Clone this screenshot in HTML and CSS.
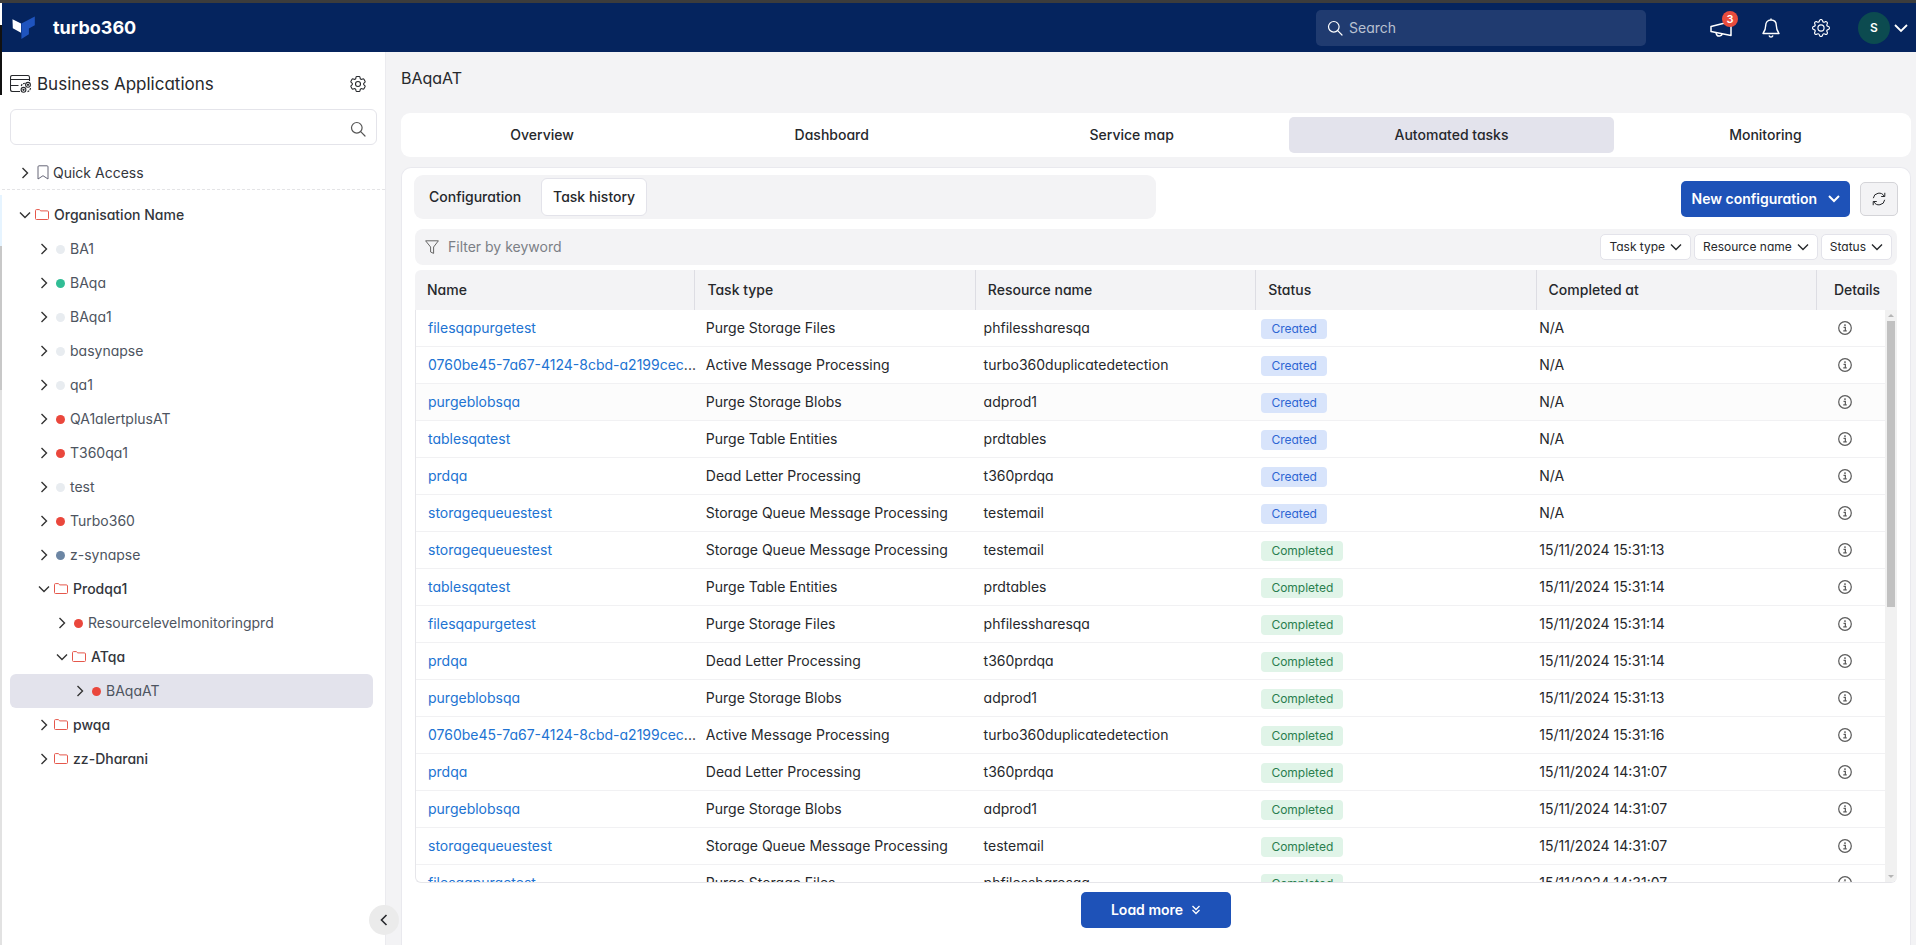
FILE: index.html
```html
<!DOCTYPE html>
<html lang="en">
<head>
<meta charset="utf-8">
<title>turbo360 - BAqaAT</title>
<link rel="stylesheet" href="styles.css">
</head>
<body>
<svg class="sprite" aria-hidden="true">
  <symbol id="i-right" viewBox="0 0 14 14"><path d="M4.5 2 9.5 7l-5 5" fill="none" stroke="currentColor" stroke-width="1.4"/></symbol>
  <symbol id="i-down" viewBox="0 0 14 14"><path d="M2 4.5 7 9.5l5-5" fill="none" stroke="currentColor" stroke-width="1.4"/></symbol>
  <symbol id="i-folder" viewBox="0 0 14 12"><path d="M.5 9.5V1.6Q.5.6 1.5.6h2.8l1.5 1.3h6.6q1.1 0 1.1 1.1v6.5q0 1-1 1h-11q-1 0-1-1z" fill="none" stroke="currentColor"/></symbol>
  <symbol id="i-search" viewBox="0 0 16 16"><circle cx="6.8" cy="6.8" r="5.3" fill="none" stroke="currentColor" stroke-width="1.2"/><path d="m10.7 10.7 4.3 4.3" stroke="currentColor" stroke-width="1.2" stroke-linecap="round"/></symbol>
  <symbol id="i-info" viewBox="0 0 16 16"><circle cx="8" cy="8" r="7.2" fill="none" stroke="currentColor" stroke-width="1.4"/><circle cx="8" cy="4.7" r="1.1" fill="currentColor"/><path d="M6.3 7.3h2.1v4M6 11.4h4" fill="none" stroke="currentColor" stroke-width="1.4"/></symbol>
</svg>

<div class="window">
<div class="window-edge"></div>
<div class="app">
  <header class="topbar">
    <a class="brand" href="#">
      <svg class="brand-mark" viewBox="0 0 24 24" aria-hidden="true"><path d="M.5 3.2 9 7.6v9.2L.8 12.2z" fill="#fff"/><path d="M9.4 7.6 22.8.6v8.6l-5.9 3.4v5.6L9.4 23z" fill="#1f54be"/></svg>
      <span>turbo360</span>
    </a>
    <label class="global-search">
      <svg class="ic16" aria-hidden="true"><use href="#i-search"/></svg>
      <input type="search" placeholder="Search" aria-label="Search">
    </label>
    <nav class="top-actions" aria-label="Account">
      <button class="top-btn" aria-label="Announcements">
        <svg class="ic22" viewBox="0 0 22 22" fill="none" stroke="currentColor" stroke-width="1.5" stroke-linejoin="round" aria-hidden="true"><path d="M1 9.5 21 4.5v14L1 14.5z"/><path d="M6 15.5q.5 4 3.600 3.500 2.400-.3 2.400-2.200"/></svg>
        <span class="count">3</span>
      </button>
      <button class="top-btn" aria-label="Notifications">
        <svg class="ic20" viewBox="0 0 20 20" fill="none" stroke="currentColor" stroke-width="1.400" stroke-linejoin="round" aria-hidden="true"><path d="M10 2c-3.600 0-5.300 2.500-5.300 5.500 0 4.200-1.200 6-2.700 8h16c-1.500-2-2.700-3.800-2.700-8C15.300 4.500 13.600 2 10 2zM10 .6V2"/><path d="M8 17.600q.6 1.500 2 1.500t2-1.500"/></svg>
      </button>
      <button class="top-btn" aria-label="Settings">
        <svg class="ic18" viewBox="0 0 16 16" fill="currentColor" aria-hidden="true"><path d="M8 4.754a3.246 3.246 0 1 0 0 6.492 3.246 3.246 0 0 0 0-6.492zM5.754 8a2.246 2.246 0 1 1 4.492 0 2.246 2.246 0 0 1-4.492 0z"/><path d="M9.796 1.343c-.527-1.79-3.065-1.79-3.592 0l-.094.319a.873.873 0 0 1-1.255.52l-.292-.16c-1.64-.892-3.433.902-2.54 2.541l.159.292a.873.873 0 0 1-.52 1.255l-.319.094c-1.79.527-1.79 3.065 0 3.592l.319.094a.873.873 0 0 1 .52 1.255l-.16.292c-.892 1.64.901 3.434 2.541 2.54l.292-.159a.873.873 0 0 1 1.255.52l.094.319c.527 1.79 3.065 1.79 3.592 0l.094-.319a.873.873 0 0 1 1.255-.52l.292.16c1.64.893 3.434-.902 2.54-2.541l-.159-.292a.873.873 0 0 1 .52-1.255l.319-.094c1.79-.527 1.79-3.065 0-3.592l-.319-.094a.873.873 0 0 1-.52-1.255l.16-.292c.893-1.64-.902-3.433-2.541-2.54l-.292.159a.873.873 0 0 1-1.255-.52l-.094-.319zm-2.633.283c.246-.835 1.428-.835 1.674 0l.094.319a1.873 1.873 0 0 0 2.693 1.115l.291-.16c.764-.415 1.6.42 1.184 1.185l-.159.292a1.873 1.873 0 0 0 1.116 2.692l.318.094c.835.246.835 1.428 0 1.674l-.319.094a1.873 1.873 0 0 0-1.115 2.693l.16.291c.415.764-.42 1.6-1.185 1.184l-.291-.159a1.873 1.873 0 0 0-2.693 1.116l-.094.318c-.246.835-1.428.835-1.674 0l-.094-.319a1.873 1.873 0 0 0-2.692-1.115l-.292.16c-.764.415-1.6-.42-1.184-1.185l.159-.291A1.873 1.873 0 0 0 1.945 8.93l-.319-.094c-.835-.246-.835-1.428 0-1.674l.319-.094A1.873 1.873 0 0 0 3.06 4.377l-.16-.292c-.415-.764.42-1.6 1.185-1.184l.292.159a1.873 1.873 0 0 0 2.692-1.115l.094-.319z"/></svg>
      </button>
      <button class="user-btn" aria-label="User menu">
        <span class="avatar">S</span>
        <svg class="ic14" viewBox="0 0 14 14" aria-hidden="true"><path d="M1 4l6 6 6-6" fill="none" stroke="currentColor" stroke-width="1.800"/></svg>
      </button>
    </nav>
  </header>

  <div class="body">
    <aside class="sidebar">
      <div class="side-head">
        <svg class="side-icon" viewBox="0 0 22 18" fill="none" stroke="currentColor" stroke-width="1.1" aria-hidden="true"><path d="M10 16.500H2.500q-2 0-2-2v-12q0-2 2-2h15q2 0 2 2V6M.5 4.500h19M.5 10.500h8"/><circle cx="18" cy="9.800" r="2.400"/><circle cx="18" cy="9.800" r=".6"/><circle cx="13.500" cy="14.800" r="2.400"/><circle cx="13.500" cy="14.800" r=".6"/><path d="M11.200 11q.8-2.500 3.600-2.600M20.500 13q-.5 3.500-4 3.800" stroke-dasharray="2 1"/></svg>
        <h1>Business Applications</h1>
        <button class="icon-btn" aria-label="Manage">
          <svg class="ic20" viewBox="0 0 24 24" fill="none" stroke="currentColor" stroke-width="1.300" aria-hidden="true"><path d="M9.594 3.940c.09-.542.56-.94 1.110-.94h2.593c.55 0 1.020.398 1.110.94l.213 1.281c.063.374.313.686.645.87.074.04.147.083.22.127.324.196.72.257 1.075.124l1.217-.456a1.125 1.125 0 0 1 1.370.49l1.296 2.247a1.125 1.125 0 0 1-.26 1.431l-1.003.827c-.293.24-.438.613-.431.992a6.759 6.759 0 0 1 0 .255c-.007.378.138.75.43.99l1.005.828c.424.35.534.954.26 1.430l-1.298 2.247a1.125 1.125 0 0 1-1.369.491l-1.217-.456c-.355-.133-.75-.072-1.076.124a6.570 6.570 0 0 1-.22.128c-.331.183-.581.495-.644.869l-.213 1.280c-.09.543-.56.941-1.110.941h-2.594c-.55 0-1.020-.398-1.110-.94l-.213-1.281c-.062-.374-.312-.686-.644-.87a6.520 6.520 0 0 1-.22-.127c-.325-.196-.72-.257-1.076-.124l-1.217.456a1.125 1.125 0 0 1-1.369-.49l-1.297-2.247a1.125 1.125 0 0 1 .26-1.431l1.004-.827c.292-.24.437-.613.43-.992a6.932 6.932 0 0 1 0-.255c.007-.378-.138-.75-.43-.99l-1.004-.828a1.125 1.125 0 0 1-.26-1.430l1.297-2.247a1.125 1.125 0 0 1 1.370-.491l1.216.456c.356.133.751.072 1.076-.124.072-.044.146-.087.22-.128.332-.183.582-.495.644-.869l.214-1.281z"/><circle cx="12" cy="12" r="3"/></svg>
        </button>
      </div>
      <label class="side-search">
        <input type="text" aria-label="Search business applications">
        <svg class="ic16" aria-hidden="true"><use href="#i-search"/></svg>
      </label>
      <div class="quick node folder l0">
        <svg class="tw" aria-hidden="true"><use href="#i-right"/></svg>
        <svg class="bookmark" viewBox="0 0 12 15" aria-hidden="true"><path d="M1 14V1.800Q1 .8 2 .8h8q1 0 1 1V14l-5-3.300z" fill="none" stroke="currentColor"/></svg>
        <span>Quick Access</span>
      </div>
      <nav class="tree" aria-label="Business applications">
        <a href="#" class="node folder l0"><svg class="tw"><use href="#i-down"/></svg><svg class="fold"><use href="#i-folder"/></svg><span>Organisation Name</span></a>
        <a href="#" class="node l1"><svg class="tw"><use href="#i-right"/></svg><i class="dot"></i><span>BA1</span></a>
        <a href="#" class="node l1"><svg class="tw"><use href="#i-right"/></svg><i class="dot green"></i><span>BAqa</span></a>
        <a href="#" class="node l1"><svg class="tw"><use href="#i-right"/></svg><i class="dot"></i><span>BAqa1</span></a>
        <a href="#" class="node l1"><svg class="tw"><use href="#i-right"/></svg><i class="dot"></i><span>basynapse</span></a>
        <a href="#" class="node l1"><svg class="tw"><use href="#i-right"/></svg><i class="dot"></i><span>qa1</span></a>
        <a href="#" class="node l1"><svg class="tw"><use href="#i-right"/></svg><i class="dot red"></i><span>QA1alertplusAT</span></a>
        <a href="#" class="node l1"><svg class="tw"><use href="#i-right"/></svg><i class="dot red"></i><span>T360qa1</span></a>
        <a href="#" class="node l1"><svg class="tw"><use href="#i-right"/></svg><i class="dot"></i><span>test</span></a>
        <a href="#" class="node l1"><svg class="tw"><use href="#i-right"/></svg><i class="dot red"></i><span>Turbo360</span></a>
        <a href="#" class="node l1"><svg class="tw"><use href="#i-right"/></svg><i class="dot slate"></i><span>z-synapse</span></a>
        <a href="#" class="node folder l1"><svg class="tw"><use href="#i-down"/></svg><svg class="fold"><use href="#i-folder"/></svg><span>Prodqa1</span></a>
        <a href="#" class="node l2"><svg class="tw"><use href="#i-right"/></svg><i class="dot red"></i><span>Resourcelevelmonitoringprd</span></a>
        <a href="#" class="node folder l2"><svg class="tw"><use href="#i-down"/></svg><svg class="fold"><use href="#i-folder"/></svg><span>ATqa</span></a>
        <a href="#" class="node l3 selected" aria-current="page"><svg class="tw"><use href="#i-right"/></svg><i class="dot red"></i><span>BAqaAT</span></a>
        <a href="#" class="node folder l1"><svg class="tw"><use href="#i-right"/></svg><svg class="fold"><use href="#i-folder"/></svg><span>pwqa</span></a>
        <a href="#" class="node folder l1"><svg class="tw"><use href="#i-right"/></svg><svg class="fold"><use href="#i-folder"/></svg><span>zz-Dharani</span></a>
      </nav>
      <button class="collapse" aria-label="Collapse sidebar"><svg class="ic14" viewBox="0 0 14 14" aria-hidden="true"><path d="M9.500 2 4.500 7l5 5" fill="none" stroke="currentColor" stroke-width="1.600"/></svg></button>
    </aside>

    <main class="main">
      <h2 class="page-title">BAqaAT</h2>
      <nav class="tabs" aria-label="Sections">
        <button>Overview</button>
        <button>Dashboard</button>
        <button>Service map</button>
        <button class="active">Automated tasks</button>
        <button>Monitoring</button>
      </nav>
      <section class="panel">
        <div class="tools">
          <div class="subtabs">
            <button>Configuration</button>
            <button class="active">Task history</button>
          </div>
          <div class="tool-actions">
            <button class="primary new-config">New configuration <svg class="ic14" viewBox="0 0 14 14" aria-hidden="true"><path d="M2 4 7 9l5-5" fill="none" stroke="currentColor" stroke-width="2"/></svg></button>
            <button class="refresh" aria-label="Refresh"><svg class="ic14" viewBox="0 0 14 14" fill="none" stroke="currentColor" aria-hidden="true"><path d="M1.300 6.200A5.800 5.800 0 0 1 12.200 4.300M12.700 7.800A5.800 5.800 0 0 1 1.800 9.700M12.800.8v3.700H9.200M1.200 13.200V9.500h3.600"/></svg></button>
          </div>
        </div>
        <div class="filterbar">
          <svg class="ic14" viewBox="0 0 14 14" fill="none" stroke="currentColor" stroke-linejoin="round" aria-hidden="true"><path d="M.6.8h12.800L8.600 7v6.400L5.600 12V7z"/></svg>
          <input type="text" placeholder="Filter by keyword" aria-label="Filter by keyword">
          <button class="chip">Task type <svg class="ic14"><use href="#i-down"/></svg></button>
          <button class="chip">Resource name <svg class="ic14"><use href="#i-down"/></svg></button>
          <button class="chip">Status <svg class="ic14"><use href="#i-down"/></svg></button>
        </div>
        <div class="grid-wrap">
        <table class="grid grid-head">
          <colgroup><col><col><col><col><col><col class="c-details"></colgroup>
          <thead><tr><th>Name</th><th>Task type</th><th>Resource name</th><th>Status</th><th>Completed at</th><th>Details</th></tr></thead>
        </table>
        <div class="grid-body">
          <div class="grid-scroll">
            <table class="grid" aria-label="Task history">
              <colgroup><col><col><col><col><col><col class="c-details"></colgroup>
              <tbody>
                <tr><td><a href="#">filesqapurgetest</a></td><td>Purge Storage Files</td><td>phfilessharesqa</td><td><span class="badge created">Created</span></td><td>N/A</td><td><button class="info" aria-label="Details"><svg class="ic14"><use href="#i-info"/></svg></button></td></tr>
                <tr><td><a href="#">0760be45-7a67-4124-8cbd-a2199cec</a>...</td><td>Active Message Processing</td><td>turbo360duplicatedetection</td><td><span class="badge created">Created</span></td><td>N/A</td><td><button class="info" aria-label="Details"><svg class="ic14"><use href="#i-info"/></svg></button></td></tr>
                <tr class="hovered"><td><a href="#">purgeblobsqa</a></td><td>Purge Storage Blobs</td><td>adprod1</td><td><span class="badge created">Created</span></td><td>N/A</td><td><button class="info" aria-label="Details"><svg class="ic14"><use href="#i-info"/></svg></button></td></tr>
                <tr><td><a href="#">tablesqatest</a></td><td>Purge Table Entities</td><td>prdtables</td><td><span class="badge created">Created</span></td><td>N/A</td><td><button class="info" aria-label="Details"><svg class="ic14"><use href="#i-info"/></svg></button></td></tr>
                <tr><td><a href="#">prdqa</a></td><td>Dead Letter Processing</td><td>t360prdqa</td><td><span class="badge created">Created</span></td><td>N/A</td><td><button class="info" aria-label="Details"><svg class="ic14"><use href="#i-info"/></svg></button></td></tr>
                <tr><td><a href="#">storagequeuestest</a></td><td>Storage Queue Message Processing</td><td>testemail</td><td><span class="badge created">Created</span></td><td>N/A</td><td><button class="info" aria-label="Details"><svg class="ic14"><use href="#i-info"/></svg></button></td></tr>
                <tr><td><a href="#">storagequeuestest</a></td><td>Storage Queue Message Processing</td><td>testemail</td><td><span class="badge completed">Completed</span></td><td>15/11/2024 15:31:13</td><td><button class="info" aria-label="Details"><svg class="ic14"><use href="#i-info"/></svg></button></td></tr>
                <tr><td><a href="#">tablesqatest</a></td><td>Purge Table Entities</td><td>prdtables</td><td><span class="badge completed">Completed</span></td><td>15/11/2024 15:31:14</td><td><button class="info" aria-label="Details"><svg class="ic14"><use href="#i-info"/></svg></button></td></tr>
                <tr><td><a href="#">filesqapurgetest</a></td><td>Purge Storage Files</td><td>phfilessharesqa</td><td><span class="badge completed">Completed</span></td><td>15/11/2024 15:31:14</td><td><button class="info" aria-label="Details"><svg class="ic14"><use href="#i-info"/></svg></button></td></tr>
                <tr><td><a href="#">prdqa</a></td><td>Dead Letter Processing</td><td>t360prdqa</td><td><span class="badge completed">Completed</span></td><td>15/11/2024 15:31:14</td><td><button class="info" aria-label="Details"><svg class="ic14"><use href="#i-info"/></svg></button></td></tr>
                <tr><td><a href="#">purgeblobsqa</a></td><td>Purge Storage Blobs</td><td>adprod1</td><td><span class="badge completed">Completed</span></td><td>15/11/2024 15:31:13</td><td><button class="info" aria-label="Details"><svg class="ic14"><use href="#i-info"/></svg></button></td></tr>
                <tr><td><a href="#">0760be45-7a67-4124-8cbd-a2199cec</a>...</td><td>Active Message Processing</td><td>turbo360duplicatedetection</td><td><span class="badge completed">Completed</span></td><td>15/11/2024 15:31:16</td><td><button class="info" aria-label="Details"><svg class="ic14"><use href="#i-info"/></svg></button></td></tr>
                <tr><td><a href="#">prdqa</a></td><td>Dead Letter Processing</td><td>t360prdqa</td><td><span class="badge completed">Completed</span></td><td>15/11/2024 14:31:07</td><td><button class="info" aria-label="Details"><svg class="ic14"><use href="#i-info"/></svg></button></td></tr>
                <tr><td><a href="#">purgeblobsqa</a></td><td>Purge Storage Blobs</td><td>adprod1</td><td><span class="badge completed">Completed</span></td><td>15/11/2024 14:31:07</td><td><button class="info" aria-label="Details"><svg class="ic14"><use href="#i-info"/></svg></button></td></tr>
                <tr><td><a href="#">storagequeuestest</a></td><td>Storage Queue Message Processing</td><td>testemail</td><td><span class="badge completed">Completed</span></td><td>15/11/2024 14:31:07</td><td><button class="info" aria-label="Details"><svg class="ic14"><use href="#i-info"/></svg></button></td></tr>
                <tr><td><a href="#">filesqapurgetest</a></td><td>Purge Storage Files</td><td>phfilessharesqa</td><td><span class="badge completed">Completed</span></td><td>15/11/2024 14:31:07</td><td><button class="info" aria-label="Details"><svg class="ic14"><use href="#i-info"/></svg></button></td></tr>
              </tbody>
            </table>
          </div>
          <div class="scrollbar" aria-hidden="true">
            <i class="arrow up"></i>
            <div class="track"><div class="thumb"></div></div>
            <i class="arrow down"></i>
          </div>
        </div>
        </div>
        <button class="primary load-more">Load more <svg class="ic10" viewBox="0 0 10 10" fill="none" stroke="currentColor" stroke-width="1.300" aria-hidden="true"><path d="M1.500 1 5 4.500 8.500 1M1.500 5 5 8.500 8.500 5"/></svg></button>
      </section>
    </main>
  </div>
</div>
</div>
</body>
</html>
```
FILE: styles.css
```css
* { box-sizing: border-box; }

body {
  margin: 0;
  font-family: Inter, "Open Sans", sans-serif;
  font-feature-settings: "cv11";
  font-size: 14px;
  line-height: 20px;
  color: #26282c;
}

button, input { font: inherit; font-feature-settings: inherit; color: inherit; }
button { cursor: pointer; border: 0; background: none; padding: 0; }
input { border: 0; background: none; padding: 0; outline: 0; min-width: 0; }
a { text-decoration: none; color: inherit; }
h1, h2 { margin: 0; }
svg { display: block; flex: none; }

.sprite { position: absolute; width: 0; height: 0; }
.ic10 { width: 10px; height: 10px; }
.ic14 { width: 14px; height: 14px; }
.ic16 { width: 16px; height: 16px; }
.ic18 { width: 18px; height: 18px; }
.ic20 { width: 20px; height: 20px; }
.ic22 { width: 22px; height: 22px; }

/* Window frame: dark strip on top, neighbouring window on the left */
.window { display: flex; height: 100vh; }
.window-edge {
  width: 2px;
  flex: none;
  background: linear-gradient(#3c3c3c 3px, #fff 3px 25px, #111 25px 95px, #fff 95px 195px, #e6f4ff 195px 246px, #c8c8c8 246px 390px, #e2e2e2 390px);
}
.app {
  flex: 1;
  min-width: 0;
  display: flex;
  flex-direction: column;
  border-top: 3px solid #3c3c3c;
}

/* Top bar */
.topbar {
  display: flex;
  align-items: center;
  height: 49px;
  flex: none;
  padding: 0 8px 0 10px;
  background: #05245e;
  color: #fff;
}
.brand { display: flex; align-items: center; gap: 17px; margin-right: auto; font-size: 18px; font-weight: 700; }
.brand-mark { width: 24px; height: 24px; }
.global-search {
  display: flex;
  align-items: center;
  gap: 6px;
  width: 330px;
  height: 36px;
  padding: 0 11px;
  border-radius: 5px;
  background: #203b70;
}
.global-search input { flex: 1; }
.global-search input::placeholder { color: #b9c1d0; opacity: 1; }
.top-actions { display: flex; align-items: center; gap: 24px; margin-left: 62px; }
.top-btn { position: relative; display: flex; align-items: center; justify-content: center; width: 26px; height: 36px; }
.count {
  position: absolute;
  top: 1px;
  right: -4px;
  width: 16px;
  height: 16px;
  border-radius: 8px;
  background: #e84c3d;
  font-size: 11px;
  line-height: 16px;
  font-weight: 600;
}
.user-btn { display: flex; align-items: center; gap: 4px; }
.avatar { width: 32px; height: 32px; border-radius: 16px; background: #0c4b50; font-size: 12px; line-height: 32px; font-weight: 600; }

.body { flex: 1; display: flex; min-height: 0; }

/* Sidebar */
.sidebar {
  position: relative;
  width: 384px;
  flex: none;
  border-right: 1px solid #ebebef;
  background: #fff;
}
.side-head { display: flex; align-items: center; gap: 5px; padding: 20px 17px 0 8px; height: 43px; }
.side-head h1 { flex: 1; font-size: 17px; font-weight: 400; line-height: 22px; }
.side-icon { width: 22px; height: 18px; }
.side-search {
  display: flex;
  align-items: center;
  height: 36px;
  margin: 14px 8px 11px;
  padding: 3px 10px 0;
  border: 1px solid #e4e4ea;
  border-radius: 6px;
}
.side-search input { flex: 1; }
.side-search svg { color: #555; }

.node {
  display: flex;
  align-items: center;
  height: 34px;
  margin: 0 12px 0 8px;
  border-radius: 6px;
  color: #4d5460;
}
.folder { font-weight: 500; color: #33363c; }
.l0 { padding-left: 8px; }
.l1 { padding-left: 27px; }
.l2 { padding-left: 45px; }
.l3 { padding-left: 63px; }
.selected { background: #e3e3ec; }
.quick.node { margin: 0 0 8px; padding-left: 16px; border-radius: 0; border-bottom: 1px dashed #e4e4e6; font-weight: 400; }
.tw { width: 14px; height: 14px; color: #333; }
.fold { width: 14px; height: 12px; margin: 0 5px 0 3px; color: #e5574b; }
.bookmark { width: 12px; height: 15px; margin: 0 4px 0 5px; color: #667; }
.dot { width: 9px; height: 9px; margin: 0 5px; border-radius: 5px; background: #e8ecf0; }
.green { background: #31bd95; }
.red { background: #ea473c; }
.slate { background: #6c86a4; }
.collapse {
  position: absolute;
  right: -14px;
  bottom: 10px;
  display: grid;
  place-items: center;
  width: 30px;
  height: 30px;
  border-radius: 15px;
  background: #ebebeb;
}

/* Main */
.main {
  flex: 1;
  min-width: 0;
  display: flex;
  flex-direction: column;
  padding: 16px 5px 0 15px;
  background: #f3f3f5;
}
.page-title { font-size: 16px; font-weight: 400; line-height: 20px; }
.tabs {
  display: flex;
  gap: 10px;
  margin-top: 25px;
  padding: 4px;
  border-radius: 9px;
  background: #fff;
}
.tabs button { flex: 1 1 auto; height: 36px; border-radius: 5px; font-weight: 500; }
.tabs .active { background: #e3e3ec; }

.panel {
  flex: 1;
  min-height: 0;
  display: flex;
  flex-direction: column;
  margin-top: 10px;
  padding: 7px 12px 17px;
  border: 1px solid #e9e9ee;
  border-bottom: 0;
  border-radius: 10px 10px 0 0;
  background: #fff;
}
.tools { display: flex; align-items: center; justify-content: space-between; }
.subtabs { display: flex; gap: 8px; width: 50%; padding: 3px; border-radius: 9px; background: #f3f3f5; }
.subtabs button { height: 38px; padding: 0 11px; border: 1px solid transparent; border-radius: 6px; font-weight: 500; }
.subtabs .active { background: #fff; border-color: #e3e3ea; }
.tool-actions { display: flex; align-items: center; gap: 10px; padding-top: 4px; }
.primary {
  display: flex;
  align-items: center;
  justify-content: center;
  height: 36px;
  border-radius: 5px;
  background: #1e52b8;
  color: #fff;
  font-weight: 600;
}
.new-config { gap: 10px; padding: 0 9px 0 11px; }
.refresh {
  display: grid;
  place-items: center;
  width: 38px;
  height: 34px;
  border: 1px solid #d4d4d8;
  border-radius: 5px;
  background: #f3f3f5;
}

.filterbar {
  display: flex;
  align-items: center;
  gap: 3px;
  height: 36px;
  flex: none;
  margin: 10px 1px 5px;
  padding: 0 5px 0 10px;
  border-radius: 8px;
  background: #f3f3f5;
}
.filterbar > svg { color: #666; }
.filterbar input { flex: 1; padding-left: 6px; }
.filterbar input::placeholder { color: #7b7f86; opacity: 1; }
.chip {
  display: flex;
  align-items: center;
  gap: 4px;
  height: 26px;
  padding: 0 7px 0 8px;
  border: 1px solid #e3e3ea;
  border-radius: 5px;
  background: #fff;
  font-size: 12px;
}

/* Table */
.grid-wrap { flex: 1; min-height: 0; display: flex; flex-direction: column; margin: 0 1px; }
.grid { width: 100%; table-layout: fixed; border-collapse: separate; border-spacing: 0; }
.grid th, .grid td { padding: 0 0 0 12px; text-align: left; white-space: nowrap; }
.c-details { width: 80px; }
.grid-head { flex: none; border-radius: 6px 6px 0 0; background: #f3f3f5; }
.grid-head th { height: 40px; font-weight: 500; border-right: 1px solid #dddde3; }
.grid-head th:last-child { border-right: 0; padding: 0; text-align: center; }
.grid-body {
  flex: 1;
  min-height: 0;
  display: flex;
  overflow: hidden;
  border: solid #e6e6ea;
  border-width: 0 0 1px 1px;
  border-radius: 0 0 6px 6px;
}
.grid-scroll { flex: 1; min-width: 0; overflow: hidden; }
.grid td { height: 37px; border-bottom: 1px solid #f1f1f3; }
.grid td a { color: #2173d2; }
.grid td:last-child { padding: 0; }
.grid td:nth-child(4) { padding-top: 2px; }
.hovered { background: #fcfcfc; }
.badge { display: block; width: max-content; height: 20px; padding: 0 10px; border-radius: 4px; font-size: 12px; line-height: 20px; }
.created { background: #d8e4fb; color: #2e66d3; }
.completed { background: #e0f4e8; color: #2a7e4e; }
.info { display: block; margin: 0 auto; color: #5c5c5c; }

.scrollbar { display: flex; flex-direction: column; align-items: center; width: 12px; flex: none; background: #f1f1f1; }
.arrow { width: 0; height: 0; margin: 4px 0; border: solid transparent; border-width: 0 3px; }
.up { border-bottom: 3px solid #b5b5b5; }
.down { border-top: 3px solid #b5b5b5; }
.track { flex: 1; width: 8px; }
.thumb { height: 52%; background: #c1c1c1; }

.load-more { align-self: center; width: 150px; flex: none; gap: 8px; margin-top: 9px; }
```
